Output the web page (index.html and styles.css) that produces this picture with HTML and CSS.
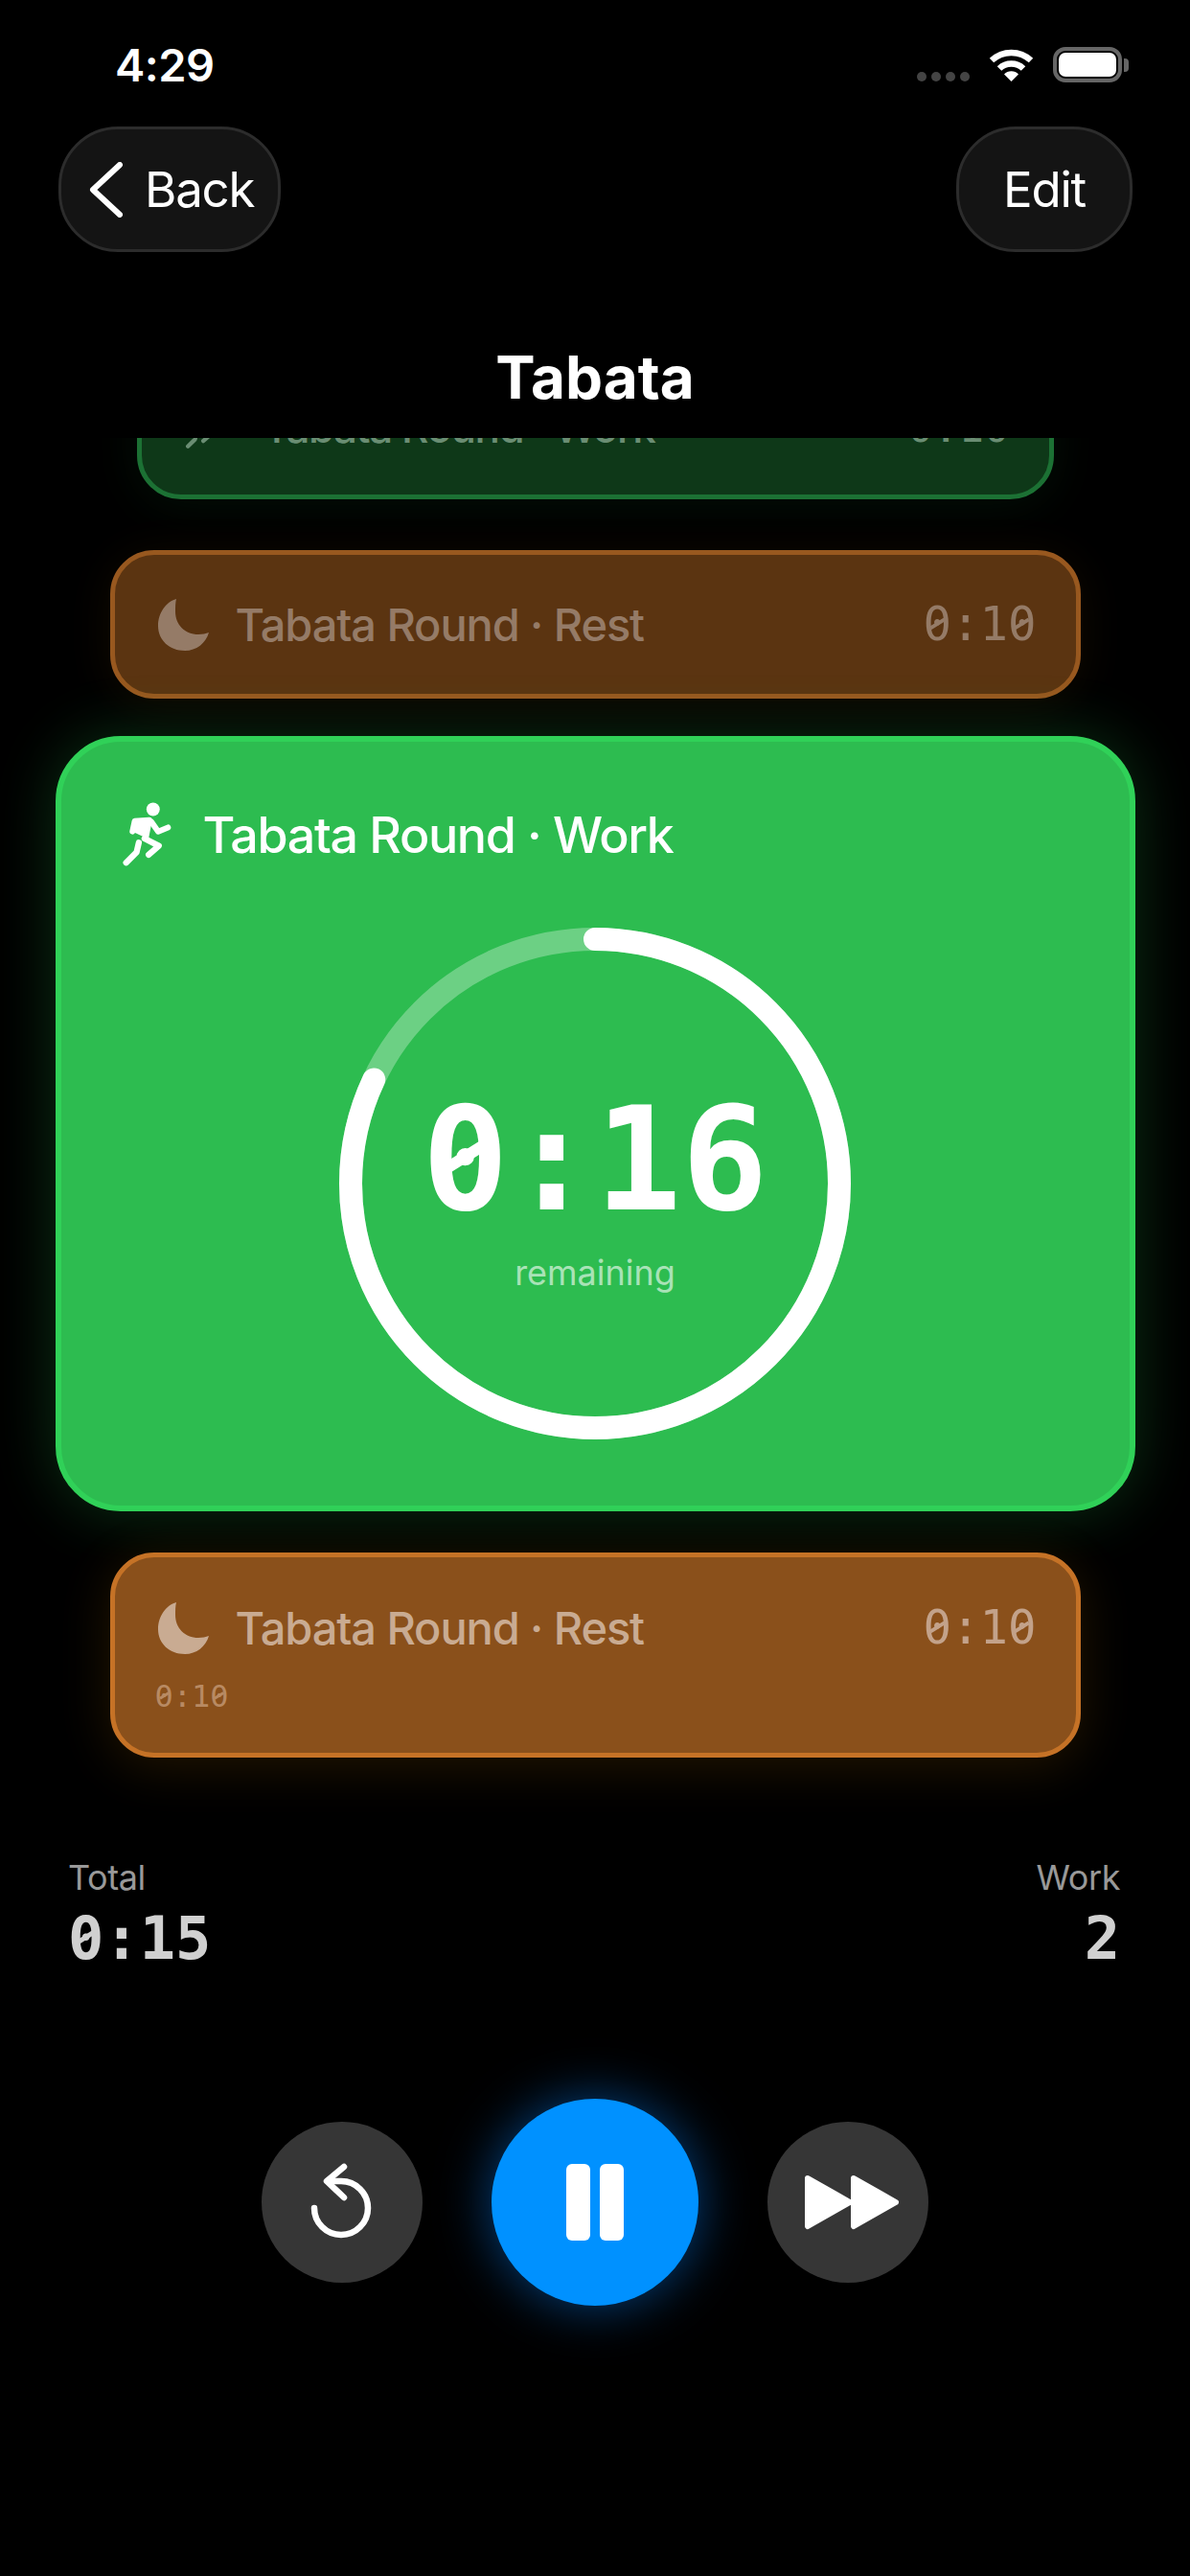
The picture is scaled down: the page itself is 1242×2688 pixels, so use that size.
FILE: index.html
```html
<!DOCTYPE html>

<html>
<head>
    <title>Tabata</title>
    <link rel="stylesheet" href="styles.css">
</head>

<body>

<div class="status">
    <div class="clock">4:29</div>
    <div class="statusIcons">
        <div class="dots"><span></span><span></span><span></span><span></span></div>
        <svg class="wifi" width="47" height="36" viewBox="0 0 47 36">
            <path d="M3 14 A30 30 0 0 1 44 14" fill="none" stroke="#fff" stroke-width="6.5"/>
            <path d="M11 22.5 A18 18 0 0 1 36 22.5" fill="none" stroke="#fff" stroke-width="6.5"/>
            <path d="M23.5 36 L16 28.5 A10.5 10.5 0 0 1 31 28.5 Z" fill="#fff"/>
        </svg>
        <div class="battery"><div class="batteryFill"></div></div>
        <div class="batteryNub"></div>
    </div>
</div>

<div class="nav">
    <div class="navBtn backBtn">
        <svg width="36" height="58" viewBox="0 0 36 58">
            <path d="M32 3 L4 29 L32 55" fill="none" stroke="#fff" stroke-width="6" stroke-linecap="round" stroke-linejoin="round"/>
        </svg>
        <span>Back</span>
    </div>
    <div class="navBtn editBtn">Edit</div>
</div>

<h1 class="title">Tabata</h1>

<div class="list">

    <div class="card cardPast">
        <svg class="cardIcon" width="36" height="46" viewBox="78 78 160 204">
            <use href="#runner"/>
        </svg>
        <span class="cardName">Tabata Round · Work</span>
        <span class="cardTime"><span class="z">0</span>:1<span class="z">0</span></span>
    </div>

    <div class="card cardPrev">
        <svg class="cardIcon" width="54" height="54" viewBox="0 0 54 54"><use href="#moon"/></svg>
        <span class="cardName">Tabata Round · Rest</span>
        <span class="cardTime"><span class="z">0</span>:1<span class="z">0</span></span>
    </div>

    <div class="active">
        <div class="activeHead">
            <svg width="53" height="68" viewBox="78 78 160 204">
                <g id="runner">
                    <circle cx="177" cy="100" r="21" fill="currentColor"/>
                    <path d="M112 170 L119 137 L165 134 L154 190" fill="currentColor" stroke="currentColor" stroke-width="18" stroke-linecap="round" stroke-linejoin="round"/>
                    <path d="M172 140 L193 170 L224 157" fill="none" stroke="currentColor" stroke-width="18" stroke-linecap="round" stroke-linejoin="round"/>
                    <path d="M150 192 L195 215 L163 243" fill="none" stroke="currentColor" stroke-width="19" stroke-linecap="round" stroke-linejoin="round"/>
                    <path d="M132 205 L125 235 L92 268" fill="none" stroke="currentColor" stroke-width="19" stroke-linecap="round" stroke-linejoin="round"/>
                </g>
            </svg>
            <span>Tabata Round · Work</span>
        </div>
        <div class="ring">
            <svg width="534" height="534" viewBox="0 0 534 534">
                <circle cx="267" cy="267" r="255" fill="none" stroke="#fff" stroke-opacity="0.3" stroke-width="24"/>
                <circle cx="267" cy="267" r="255" fill="none" stroke="#fff" stroke-width="24" stroke-linecap="round" pathLength="100" stroke-dasharray="82 100" transform="rotate(-90 267 267)"/>
            </svg>
            <div class="ringText">
                <div class="bigTime"><span class="z">0</span>:16</div>
                <div class="remaining">remaining</div>
            </div>
        </div>
    </div>

    <div class="card cardNext">
        <div class="nextRow">
            <svg class="cardIcon" width="54" height="54" viewBox="0 0 54 54">
                <path id="moon" fill="currentColor" d="M19 0 C8 3 0 15 0 28 C0 43 12 54 28 54 C40 54 50 46 53 35 C50 36 46 37 42 37 C28 37 18 27 18 13 C18 8 18 4 19 0Z"/>
            </svg>
            <span class="cardName">Tabata Round · Rest</span>
            <span class="cardTime"><span class="z">0</span>:1<span class="z">0</span></span>
        </div>
        <div class="nextSub"><span class="z">0</span>:1<span class="z">0</span></div>
    </div>

</div>

<div class="stats">
    <div>
        <div class="statLabel">Total</div>
        <div class="statValue"><span class="z">0</span>:15</div>
    </div>
    <div class="statRight">
        <div class="statLabel">Work</div>
        <div class="statValue">2</div>
    </div>
</div>

<div class="controls">
    <div class="ctrl">
        <svg class="replayIcon" width="84" height="92" viewBox="0 0 84 92">
            <path d="M8 47 A28 28 0 1 0 36 19 L24 19" fill="none" stroke="#fff" stroke-width="6.5" stroke-linecap="round"/>
            <path d="M39 4 L21 19 L39 36" fill="none" stroke="#fff" stroke-width="6.5" stroke-linecap="round" stroke-linejoin="round"/>
        </svg>
    </div>
    <div class="ctrl ctrlMain">
        <div class="pauseBar"></div>
        <div class="pauseBar"></div>
    </div>
    <div class="ctrl">
        <svg class="forwardIcon" width="100" height="58" viewBox="0 0 100 58">
            <path d="M4 4 L48 29 L4 54 Z M52 4 L96 29 L52 54 Z" fill="#fff" stroke="#fff" stroke-width="6" stroke-linejoin="round"/>
        </svg>
    </div>
</div>

</body>
</html>
```

FILE: styles.css
```css
*{
    box-sizing: border-box;
}
body{
    margin: 0;
    width: 1242px;
    height: 2688px;
    overflow: hidden;
    background: #000;
    color: #fff;
    font-family: Inter, "Liberation Sans", sans-serif;
}

/* status bar */
.status{
    display: flex;
    justify-content: space-between;
    align-items: flex-start;
    height: 132px;
    padding: 44px 64px 0 120px;
}
.clock{
    font-size: 47px;
    line-height: 48px;
    font-weight: 600;
    letter-spacing: -0.5px;
}
.statusIcons{
    display: flex;
    align-items: flex-end;
    margin-top: 5px;
    height: 37px;
}
.dots{
    display: flex;
    gap: 5px;
    margin-right: 20px;
    margin-bottom: 1px;
}
.dots span{
    width: 10px;
    height: 10px;
    border-radius: 50%;
    background: #444;
}
.wifi{
    margin-right: 20px;
    margin-bottom: 1px;
}
.battery{
    width: 72px;
    height: 37px;
    padding: 2px;
    border: 4px solid #666;
    border-radius: 13px;
}
.batteryFill{
    width: 100%;
    height: 100%;
    background: #fff;
    border-radius: 7px;
}
.batteryNub{
    width: 5px;
    height: 14px;
    margin: 0 0 11px 2px;
    background: #666;
    border-radius: 0 4px 4px 0;
}

/* nav */
.nav{
    display: flex;
    justify-content: space-between;
    padding: 0 60px 0 61px;
}
.navBtn{
    display: flex;
    align-items: center;
    height: 131px;
    background: #141414;
    border: 3px solid #2c2c2c;
    border-radius: 62px;
    font-size: 51px;
    letter-spacing: -1.2px;
}
.backBtn{
    width: 232px;
    padding-left: 29px;
    gap: 22px;
}
.editBtn{
    width: 184px;
    justify-content: center;
}
.title{
    margin: 102px 0 34px;
    font-size: 62px;
    line-height: 58px;
    font-weight: 700;
    text-align: center;
}

/* the list of intervals */
.list{
    display: flex;
    flex-direction: column;
    align-items: center;
    height: 1478px;
    overflow: hidden;
}
.card{
    display: flex;
    align-items: center;
    border: 5px solid;
    border-radius: 46px;
}
.cardIcon{
    flex: none;
}
.cardName{
    font-weight: 500;
    flex: 1;
    letter-spacing: -1.1px;
}
.cardTime{
    font-family: "DejaVu Sans Mono", monospace;
}

/* DejaVu draws a dotted zero, the reference has a slashed one */
.z{
    position: relative;
}
.z::after{
    content: "";
    position: absolute;
    left: 0.13em;
    top: 0.525em;
    width: 0.34em;
    height: 0.08em;
    background: currentColor;
    transform: rotate(-32deg);
}

.cardPast{
    width: 957px;
    height: 140px;
    margin-top: -76px;
    padding: 0 41px 10px 45px;
    gap: 46px;
    background: #0e3818;
    border-color: #1c7134;
    color: #6a8d73;
    font-size: 44px;
    line-height: 40px;
    box-shadow: 0 6px 50px rgba(48, 209, 88, 0.08);
}
.cardPast .cardName{
    letter-spacing: -1.5px;
}
.cardPrev{
    width: 1013px;
    height: 155px;
    margin-top: 53px;
    padding: 0 41px 0 45px;
    gap: 27px;
    background: #5b3411;
    border-color: #98581f;
    color: #957b67;
    font-size: 47px;
    box-shadow: 0 6px 50px rgba(255, 159, 10, 0.07);
}
.cardPrev .cardTime{
    font-size: 49px;
}
.cardNext{
    display: block;
    width: 1013px;
    height: 214px;
    margin-top: 43px;
    padding: 45px 41px 0 45px;
    background: #8a501b;
    border-color: #c57226;
    color: #c9ab92;
    font-size: 47px;
    box-shadow: 0 8px 54px rgba(255, 159, 10, 0.14);
}
.cardNext .cardTime{
    font-size: 49px;
    color: #c3a28a;
}
.nextRow{
    display: flex;
    align-items: center;
    gap: 27px;
}
.nextSub{
    margin: 23px 0 0 -3px;
    font-family: "DejaVu Sans Mono", monospace;
    font-size: 32px;
    line-height: 40px;
    color: #b88a63;
}

/* running interval */
.active{
    flex: none;
    display: flex;
    flex-direction: column;
    align-items: center;
    width: 1127px;
    height: 809px;
    margin-top: 39px;
    padding-top: 63px;
    background: #2dbc50;
    border: 6px solid #30d158;
    border-radius: 68px;
    box-shadow: 0 0 64px rgba(48, 209, 88, 0.24);
}
.activeHead{
    display: flex;
    align-items: center;
    align-self: stretch;
    gap: 32px;
    height: 68px;
    padding-left: 63px;
    font-size: 52px;
    font-weight: 500;
    letter-spacing: -1.35px;
}
.ring{
    display: grid;
    margin-top: 63px;
}
.ring svg,
.ringText{
    grid-area: 1 / 1;
}
.ringText{
    display: flex;
    flex-direction: column;
    align-items: center;
    justify-content: center;
    padding-top: 14px;
}
.bigTime{
    font-family: "DejaVu Sans Mono", monospace;
    font-size: 150px;
    line-height: 150px;
    font-weight: 700;
}
.remaining{
    margin-top: 21px;
    font-size: 36px;
    line-height: 44px;
    color: rgba(255, 255, 255, 0.6);
}

/* totals */
.stats{
    display: flex;
    justify-content: space-between;
    padding: 2px 73px 0 71px;
}
.statRight{
    text-align: right;
}
.statLabel{
    font-size: 36px;
    line-height: 44px;
    letter-spacing: -0.4px;
    color: #999;
}
.statValue{
    margin-top: 12px;
    font-family: "DejaVu Sans Mono", monospace;
    font-size: 62px;
    line-height: 60px;
    font-weight: 700;
    color: #d0d0d0;
}

/* transport */
.controls{
    display: flex;
    justify-content: center;
    align-items: center;
    gap: 72px;
    margin-top: 137px;
}
.ctrl{
    display: flex;
    justify-content: center;
    align-items: center;
    width: 168px;
    height: 168px;
    border-radius: 50%;
    background: #363636;
}
.replayIcon{
    margin: 10px 0 0 10px;
}
.forwardIcon{
    margin-left: 8px;
}
.ctrlMain{
    width: 216px;
    height: 216px;
    gap: 10px;
    background: #0091ff;
    box-shadow: 0 0 54px rgba(10, 132, 255, 0.5);
}
.pauseBar{
    width: 25px;
    height: 80px;
    background: #fff;
    border-radius: 6px;
}
```
